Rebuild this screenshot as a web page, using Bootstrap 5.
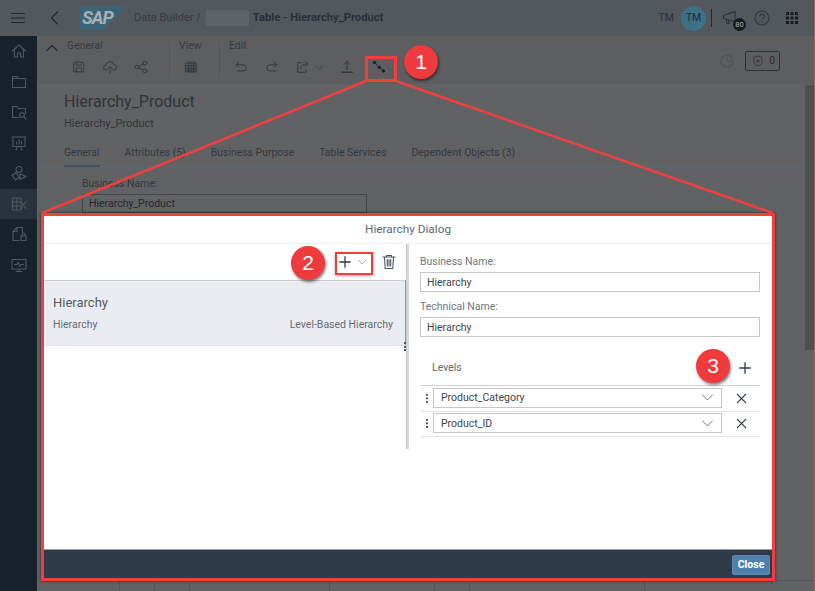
<!DOCTYPE html>
<html lang="en">
<head>
<meta charset="utf-8">
<title>Hierarchy Dialog</title>
<link href="https://cdn.jsdelivr.net/npm/bootstrap@5.3.0/dist/css/bootstrap.min.css" rel="stylesheet">
<style>
html,body{height:100%}
body{width:815px;height:591px;overflow:hidden;background:#616264;color:#2b3238;font-family:Roboto,"Liberation Sans",sans-serif;font-size:11px;position:relative}
svg{display:block}
.ico{width:16px;height:16px;fill:none;stroke:currentColor;stroke-width:1.1;stroke-linecap:round;stroke-linejoin:round}
.shell-top{height:36px;background:#53585d;flex:none;padding-left:9px}
.burger{width:18px;color:#22282d}
.back-ico{margin-left:20px;color:#22282d;width:16px}
.sap-mark{width:46px;height:24px;margin-left:17px;background:#3c6478;clip-path:polygon(0 0,100% 0,50% 100%,0 100%);color:#a9b0b5;font-weight:700;font-style:italic;font-size:18px;line-height:24px;letter-spacing:-1px;padding-left:2px}
.crumb{font-size:11px;color:#363c41;margin-left:8px}
.blur-chip{width:43px;height:16px;background:#5d6367;margin:0 4px 0 5px}
.crumb-title{font-size:11.2px;font-weight:700;color:#2a3035}
.tm-txt{font-size:10.5px;color:#2a3035}
.avatar{width:25px;height:25px;border-radius:50%;background:#3e7086;color:#1f2a30;font-size:10.5px;margin-left:7px}
.top-sep{width:1px;height:18px;background:#23282c;margin:0 10px 0 5px}
.mega{position:relative;width:20px;color:#2b3238}
.mega-badge{position:absolute;left:11px;top:8px;width:13px;height:13px;border-radius:50%;background:#171c21;color:#aeb3b7;font-size:7.5px;line-height:13px;text-align:center}
.help-ico{margin-left:12px;color:#33393e;width:16px}
.apps-ico{margin:0 16px 0 15px;width:14px;height:14px;fill:#171c21;stroke:none}
.work-row{min-height:0}
.side-rail{width:37px;background:#18222d;flex:none;color:#4f5861}
.rail-item{height:30.5px}
.rail-on{background:#29333d}
.main-col{min-width:0}
.tool-strip{height:49px;background:#5c5e60;flex:none;position:relative;padding-left:7px;border-bottom:1px dotted #66686a}
.chev-up{width:16px;margin-top:4px;color:#22282d;flex:none}
.tool-group{padding-top:3px}
.tool-first{margin-left:7px;width:94px}
.tool-view{width:32px}
.tool-label{font-size:10.5px;line-height:14px;color:#363c41}
.tool-icons{margin-top:6px;color:#33393e;gap:15px}
.tool-icons .ico{width:14px;height:14px;margin:1px;flex:none}
.tool-pad{margin-left:4px}
.tool-icons .drop-mini{width:9px;height:9px;margin:0 0 0 4px}
.tool-icons .node-ico{width:12px;height:12px;margin:-1px 0 0 3px;color:#1d2226;stroke-width:.8}
.tool-sep{width:1px;height:38px;background:#54565a;margin:5px 9px 0 8px}
.tool-side{height:20px;margin-top:15px;padding-right:35px;color:#4f5356}
.clock-ico{width:16px;height:16px}
.shield-box{height:20px;width:35px;margin-left:10px;padding-left:6px;gap:5px;border:1px solid #2b3238;border-radius:2px;color:#2b3238}
.shield-ico{width:12px;height:12px}
.page-body{min-height:0;padding-left:27px;position:relative}
.page-name{font-size:16px;line-height:20px;font-weight:400;color:#2f353a;margin:7px 0 0}
.page-sub{font-size:11px;line-height:14px;margin:5px 0 0;color:#30363b}
.tab-strip{margin:12px 15px 0 -27px;padding-left:27px;border-bottom:1px solid #5b6a74;height:24px;gap:25px;flex-wrap:nowrap}
.tab-item{font-size:10.45px;line-height:14px;color:#33393e;height:24px;padding-top:3px;white-space:nowrap}
.tab-on{border-bottom:2px solid #3c5464}
.field-wrap{padding:10px 0 0 18px;width:303px}
.field-lab{font-size:10.5px;line-height:13px;color:#33393e;margin-bottom:4px}
.dim-input{height:19px;border:1px solid #45484b;padding:0 6px;font-size:10.5px;line-height:17px;color:#24292d;background:#626365}
.under-grid{height:11px;margin-top:auto;border-top:1px solid #54565a;margin-left:6px}
.under-cell{border-right:1px solid #54565a}
.uc-50{width:50px}.uc-35{width:35px}.uc-140{width:140px}.uc-105{width:105px}.uc-175{width:175px}
.right-scroll{position:absolute;right:0;top:85px;width:10px;height:265px;background:#4d4f51}
.edge-tint{position:absolute;right:0;top:0;bottom:0;width:1px;background:#8b6a5c}
.dlg{position:absolute;left:41px;top:213px;width:734px;height:368px;border:3px solid #ef4040;border-radius:0;background:#fff;box-shadow:0 0 3px rgba(0,0,0,.6);overflow:hidden}
.dlg-title{height:28px;flex:none;border-bottom:1px solid #eceef0;color:#63686d;font-size:11.8px;line-height:26px;padding:0;background:#fff}
.dlg-body{min-height:0}
.left-pane{width:362px;flex:none;height:100%}
.left-bar{height:36px;color:#2f3b48;padding-right:9px;flex:none}
.split-mark{width:38px;height:23px}
.plus-ico{width:12px;height:12px;stroke-width:1.7;color:#2f3b48}
.down-ico{width:10px;height:10px;color:#6d7780;margin-left:6px}
.bin-ico{margin-left:9px;color:#4b5560}
.list-group .hier-row{height:66px;background:#e9edf2;border:0;border-top:1px solid #c9ced3;border-bottom:1px solid #dde1e5;border-radius:0;padding:13px 13px 0 9px;color:#5a6066}
.hier-name{font-size:13px;line-height:17px;color:#565c61}
.hier-meta{font-size:10.5px;line-height:14px;margin-top:7px;color:#666c72}
.split-line{width:3px;height:205px;flex:none;background:#d9d9d9;position:relative;border-left:1px solid #c9c9c9}
.split-blue{position:absolute;left:-2px;top:36px;width:1px;height:65px;background:#6fa3cc}
.split-grip{position:absolute;left:-3px;top:98px;width:2px;height:9px;background:repeating-linear-gradient(#2f5d8a 0 2px,transparent 2px 3.5px)}
.right-pane{width:340px;flex:none;margin-left:11px;padding-top:11px}
.pane-lab{font-size:10.5px;line-height:13px;color:#72777c;margin-bottom:4px}
.slim-input.form-control{height:20px;min-height:0;padding:0 6px;font-size:10.5px;border:1px solid #c4c6c8;border-radius:0;color:#3f444a;box-shadow:none}
.lab-gap{margin-top:8px}
.levels-head{height:36px;margin-top:13px;border-bottom:1px solid #d2d4d6;padding:0 9px 0 12px;font-size:10.5px;color:#63686e}
.level-row{height:25.5px;border-bottom:1px solid #e3e4e6;padding-right:13px}
.grip{width:13px;flex:none;height:11px;background:radial-gradient(circle,#4c5258 .9px,transparent 1.1px) center top/2px 3.6px repeat-y}
.level-box{width:289px;height:20px;margin-top:-1px;border:1px solid #c4c6c8;padding:0 7px;font-size:10.5px;line-height:17px;color:#3f444a;flex:none}
.level-down{width:13px;height:13px;color:#5b6066}
.x-ico{width:11px;height:11px;stroke-width:1.9;color:#2f3b48;margin-left:auto}
.dlg-foot{height:29px;flex:none;background:#2f3b48;border-top:1px solid #8da0ad;padding:0 2px 3px 0}
.close-btn.btn{background:#4f81ac;border:1px solid #5a8ab3;color:#fff;font-size:10.5px;font-weight:700;padding:0;width:38px;height:20px;line-height:18px;border-radius:2px}
.mark-layer{position:absolute;left:0;top:0;width:815px;height:591px;pointer-events:none;overflow:visible}
.num-pin{position:absolute;width:34px;height:34px;border-radius:50%;background:#ef3a3e;color:#fff;font-family:"Liberation Sans",Arial,sans-serif;font-size:21px;line-height:34px;text-align:center;box-shadow:1px 2px 3px rgba(0,0,0,.5)}
.pin-a{left:404px;top:45px}
.pin-b{left:291px;top:246px}
.pin-c{left:696px;top:349px}
.box-a{position:absolute;left:365px;top:56px;width:32px;height:26px;border:3px solid #ef4040}
.box-b{position:absolute;left:335px;top:252px;width:38px;height:23px;border:2px solid #ef4040;box-shadow:0 1px 3px rgba(0,0,0,.35)}
</style>
</head>
<body>
<svg width="0" height="0" class="position-absolute">
<defs>
<symbol id="i-chev" viewBox="0 0 16 16"><path d="M3 10.500 8 5.500l5 5"/></symbol>
<symbol id="i-down" viewBox="0 0 16 16"><path d="M2 5l6 6 6-6"/></symbol>
<symbol id="i-plus" viewBox="0 0 16 16"><path d="M8 1v14M1 8h14"/></symbol>
<symbol id="i-x" viewBox="0 0 16 16"><path d="M2 2l12 12M14 2 2 14"/></symbol>
<symbol id="i-bin" viewBox="0 0 16 16"><path d="M2 3h12M5.500 3V1.500h5V3M3.500 3l.7 11.500h7.600L12.500 3M6.300 5.500v6.500M8 5.500v6.500M9.700 5.500v6.500"/></symbol>
<symbol id="i-home" viewBox="0 0 16 16"><path d="M1.500 8 8 2l6.500 6M3.500 6.500V14h3v-4h3v4h3V6.500"/></symbol>
<symbol id="i-folder" viewBox="0 0 16 16"><path d="M1.500 2.500h4.500l1.500 2h7v9h-13z"/><path d="M1.500 4.500h6"/></symbol>
<symbol id="i-fsearch" viewBox="0 0 16 16"><path d="M8 13.500H1.500v-11h4.500l1.500 2h7v5"/><circle cx="11" cy="11" r="2.300"/><path d="M12.700 12.700 15 15"/></symbol>
<symbol id="i-board" viewBox="0 0 16 16"><path d="M1 2h14M2 2v9.500h12V2M5 15l1.500-3.500M11 15l-1.500-3.500M8 1v1"/><path d="M5.500 9V7M8 9V4.500M10.500 9V6"/></symbol>
<symbol id="i-shapes" viewBox="0 0 16 16"><circle cx="8" cy="4.500" r="3"/><path d="M1 10.500l4-3 3.500 4.500-4 3zM9 9l6 2.500-6 3z"/></symbol>
<symbol id="i-tablex" viewBox="0 0 16 16"><path d="M1.500 2h8.500v12H1.500zM1.500 6h8.500M1.500 10h8.500M5.800 2v12"/><path d="M10 5.500l5 7M15 5.500l-5 7"/></symbol>
<symbol id="i-filelock" viewBox="0 0 16 16"><path d="M8 14.500H2V5.500L6 1.500h5.500v5M6 1.500v4H2"/><path d="M10 10h5v4.500h-5zM11 10V8.500a1.500 1.500 0 0 1 3 0V10"/></symbol>
<symbol id="i-pulse" viewBox="0 0 16 16"><path d="M1 2.500h14v9.500H1zM5 14.500h6M8 12v2.500"/><path d="M3.500 7.500h2.500l1-2 2 4 1-2h2.500"/></symbol>
<symbol id="i-save" viewBox="0 0 16 16"><path d="M2.500 2.500h9.500l1.500 1.500v9.500h-11z"/><path d="M5 2.500v3.500h6V2.500M5 13.500v-4.500h6v4.500"/></symbol>
<symbol id="i-cloud" viewBox="0 0 16 16"><path d="M4.500 11.500H4a3 3 0 0 1-.4-6 4.500 4.500 0 0 1 8.700-.5 3 3 0 0 1-.3 6.500h-.5"/><path d="M8 15V7.500M5.500 10 8 7.500l2.500 2.500"/></symbol>
<symbol id="i-share" viewBox="0 0 16 16"><circle cx="3.500" cy="8" r="2.200"/><circle cx="12.500" cy="3.500" r="2.200"/><circle cx="12.500" cy="12.500" r="2.200"/><path d="M5.500 7l5-2.500M5.500 9l5 2.500"/></symbol>
<symbol id="i-grid" viewBox="0 0 16 16"><path d="M2 3.500h12v10H2zM2 6.500h12M2 9.300h12M2 11.500h12M5 2v12M8 2v12M11 2v12"/></symbol>
<symbol id="i-undo" viewBox="0 0 16 16"><path d="M5.500 2.500 2.500 5.500l3 3M2.500 5.500h8a3 3 0 0 1 0 7H4"/></symbol>
<symbol id="i-redo" viewBox="0 0 16 16"><path d="M10.500 2.500l3 3-3 3M13.500 5.500h-8a3 3 0 0 0 0 7H12"/></symbol>
<symbol id="i-export" viewBox="0 0 16 16"><path d="M6 3H2v11h9.500v-3"/><path d="M5.500 10c.5-4 3-5.500 8-5.500M10.500 1.500l3 3-3 3"/></symbol>
<symbol id="i-upload" viewBox="0 0 16 16"><path d="M8 11V1.500M4.500 5 8 1.500 11.500 5"/><path d="M2 14h12" stroke-width="1.600"/></symbol>
<symbol id="i-nodes" viewBox="0 0 12 12"><path d="M1.500 1.500l5 5 4 3.500"/><circle cx="1.500" cy="1.500" r="1.300" fill="currentColor"/><circle cx="6.300" cy="6.300" r="1.300" fill="currentColor"/><circle cx="10.500" cy="10" r="1.300" fill="currentColor"/></symbol>
<symbol id="i-clock" viewBox="0 0 16 16"><circle cx="8" cy="8" r="6"/><path d="M8 4.500V8h3.500"/></symbol>
<symbol id="i-shield" viewBox="0 0 16 16"><path d="M8 1.500 13.500 3.500v5c0 3-2.500 5-5.500 6-3-1-5.500-3-5.500-6v-5z"/><path d="M6 6.500l4 3M10 6.500 6 9.500"/></symbol>
<symbol id="i-mega" viewBox="0 0 16 16"><path d="M1.500 5.500 13 1.500v10L1.500 8.500zM4 9l1 4.500h2L6.300 10"/></symbol>
<symbol id="i-help" viewBox="0 0 16 16"><circle cx="8" cy="8" r="7"/><path d="M5.800 6.200a2.200 2.200 0 1 1 3.400 1.900c-.8.500-1.200 1-1.200 1.900M8 12v.4"/></symbol>
<symbol id="i-burger" viewBox="0 0 16 16"><path d="M1.500 3.500h13M1.500 8h13M1.500 12.500h13"/></symbol>
<symbol id="i-back" viewBox="0 0 16 16"><path d="M10.500 2 4.500 8l6 6"/></symbol>
<symbol id="i-dots9" viewBox="0 0 14 14"><path d="M1 1h3v3H1zM5.500 1h3v3h-3zM10 1h3v3h-3zM1 5.500h3v3H1zM5.500 5.500h3v3h-3zM10 5.500h3v3h-3zM1 10h3v3H1zM5.500 10h3v3h-3zM10 10h3v3h-3z"/></symbol>
</defs>
</svg>

<div class="d-flex flex-column h-100">
  <header class="shell-top d-flex align-items-center">
    <svg class="ico burger"><use href="#i-burger"/></svg>
    <svg class="ico back-ico"><use href="#i-back"/></svg>
    <div class="sap-mark">SAP</div>
    <span class="crumb">Data Builder /</span><span class="blur-chip"></span>
    <span class="crumb-title">Table - Hierarchy_Product</span>
    <div class="ms-auto d-flex align-items-center">
      <span class="tm-txt">TM</span>
      <span class="avatar d-flex align-items-center justify-content-center">TM</span>
      <span class="top-sep"></span>
      <span class="mega"><svg class="ico"><use href="#i-mega"/></svg><span class="mega-badge">80</span></span>
      <svg class="ico help-ico"><use href="#i-help"/></svg>
      <svg class="apps-ico"><use href="#i-dots9"/></svg>
    </div>
  </header>
  <div class="work-row d-flex flex-grow-1">
    <nav class="side-rail d-flex flex-column">
      <div class="rail-item d-flex align-items-center justify-content-center"><svg class="ico"><use href="#i-home"/></svg></div>
      <div class="rail-item d-flex align-items-center justify-content-center"><svg class="ico"><use href="#i-folder"/></svg></div>
      <div class="rail-item d-flex align-items-center justify-content-center"><svg class="ico"><use href="#i-fsearch"/></svg></div>
      <div class="rail-item d-flex align-items-center justify-content-center"><svg class="ico"><use href="#i-board"/></svg></div>
      <div class="rail-item d-flex align-items-center justify-content-center"><svg class="ico"><use href="#i-shapes"/></svg></div>
      <div class="rail-item rail-on d-flex align-items-center justify-content-center"><svg class="ico"><use href="#i-tablex"/></svg></div>
      <div class="rail-item d-flex align-items-center justify-content-center"><svg class="ico"><use href="#i-filelock"/></svg></div>
      <div class="rail-item d-flex align-items-center justify-content-center"><svg class="ico"><use href="#i-pulse"/></svg></div>
    </nav>
    <div class="main-col flex-grow-1 d-flex flex-column">
      <div class="tool-strip d-flex">
        <svg class="ico chev-up"><use href="#i-chev"/></svg>
        <div class="tool-group tool-first">
          <div class="tool-label">General</div>
          <div class="tool-icons tool-pad d-flex"><svg class="ico"><use href="#i-save"/></svg><svg class="ico"><use href="#i-cloud"/></svg><svg class="ico"><use href="#i-share"/></svg></div>
        </div>
        <span class="tool-sep"></span>
        <div class="tool-group tool-view">
          <div class="tool-label">View</div>
          <div class="tool-icons tool-pad d-flex"><svg class="ico"><use href="#i-grid"/></svg></div>
        </div>
        <span class="tool-sep"></span>
        <div class="tool-group">
          <div class="tool-label">Edit</div>
          <div class="tool-icons tool-pad d-flex align-items-center"><svg class="ico"><use href="#i-undo"/></svg><svg class="ico"><use href="#i-redo"/></svg><span class="d-flex align-items-center"><svg class="ico"><use href="#i-export"/></svg><svg class="ico drop-mini"><use href="#i-down"/></svg></span><svg class="ico"><use href="#i-upload"/></svg><svg class="ico node-ico"><use href="#i-nodes"/></svg></div>
        </div>
        <div class="tool-side ms-auto d-flex align-items-center">
          <svg class="ico clock-ico"><use href="#i-clock"/></svg>
          <span class="shield-box d-flex align-items-center"><svg class="ico shield-ico"><use href="#i-shield"/></svg>0</span>
        </div>
      </div>
      <div class="page-body flex-grow-1 d-flex flex-column">
        <h1 class="page-name">Hierarchy_Product</h1>
        <p class="page-sub">Hierarchy_Product</p>
        <div class="nav tab-strip">
          <span class="tab-item tab-on">General</span>
          <span class="tab-item">Attributes (5)</span>
          <span class="tab-item">Business Purpose</span>
          <span class="tab-item">Table Services</span>
          <span class="tab-item">Dependent Objects (3)</span>
        </div>
        <div class="field-wrap">
          <div class="field-lab">Business Name:</div>
          <div class="dim-input">Hierarchy_Product</div>
        </div>
        <div class="under-grid d-flex">
          <div class="under-cell uc-50"></div><div class="under-cell uc-35"></div><div class="under-cell uc-35"></div><div class="under-cell uc-140"></div><div class="under-cell uc-105"></div><div class="under-cell uc-35"></div><div class="under-cell uc-175"></div>
        </div>
      </div>
    </div>
  </div>
</div>
<div class="right-scroll"></div>
<div class="edge-tint"></div>

<section class="card dlg d-flex flex-column">
  <div class="dlg-title card-header text-center">Hierarchy Dialog</div>
  <div class="dlg-body flex-grow-1 d-flex">
    <div class="left-pane d-flex flex-column">
      <div class="left-bar d-flex align-items-center justify-content-end">
        <span class="split-mark d-flex align-items-center justify-content-center"><svg class="ico plus-ico"><use href="#i-plus"/></svg><svg class="ico down-ico"><use href="#i-down"/></svg></span>
        <svg class="ico bin-ico"><use href="#i-bin"/></svg>
      </div>
      <div class="list-group">
        <div class="list-group-item hier-row">
          <div class="hier-name">Hierarchy</div>
          <div class="hier-meta d-flex justify-content-between"><span>Hierarchy</span><span>Level-Based Hierarchy</span></div>
        </div>
      </div>
    </div>
    <div class="split-line"><span class="split-blue"></span><span class="split-grip"></span></div>
    <div class="right-pane">
      <div class="pane-lab">Business Name:</div>
      <input class="form-control slim-input" value="Hierarchy" readonly>
      <div class="pane-lab lab-gap">Technical Name:</div>
      <input class="form-control slim-input" value="Hierarchy" readonly>
      <div class="levels-head d-flex align-items-center justify-content-between"><span>Levels</span><svg class="ico plus-ico"><use href="#i-plus"/></svg></div>
      <div class="level-row d-flex align-items-center">
        <span class="grip"></span>
        <div class="level-box d-flex align-items-center justify-content-between"><span>Product_Category</span><svg class="ico level-down"><use href="#i-down"/></svg></div>
        <svg class="ico x-ico"><use href="#i-x"/></svg>
      </div>
      <div class="level-row d-flex align-items-center">
        <span class="grip"></span>
        <div class="level-box d-flex align-items-center justify-content-between"><span>Product_ID</span><svg class="ico level-down"><use href="#i-down"/></svg></div>
        <svg class="ico x-ico"><use href="#i-x"/></svg>
      </div>
    </div>
  </div>
  <div class="dlg-foot d-flex align-items-end justify-content-end">
    <button class="btn close-btn" type="button">Close</button>
  </div>
</section>

<svg class="mark-layer" viewBox="0 0 815 591">
  <path d="M366 81 42 213M396 81 773 213" stroke="#ef4040" stroke-width="2.500" fill="none"/>
</svg>
<div class="box-a"></div>
<div class="box-b"></div>
<div class="num-pin pin-a">1</div>
<div class="num-pin pin-b">2</div>
<div class="num-pin pin-c">3</div>
</body>
</html>
